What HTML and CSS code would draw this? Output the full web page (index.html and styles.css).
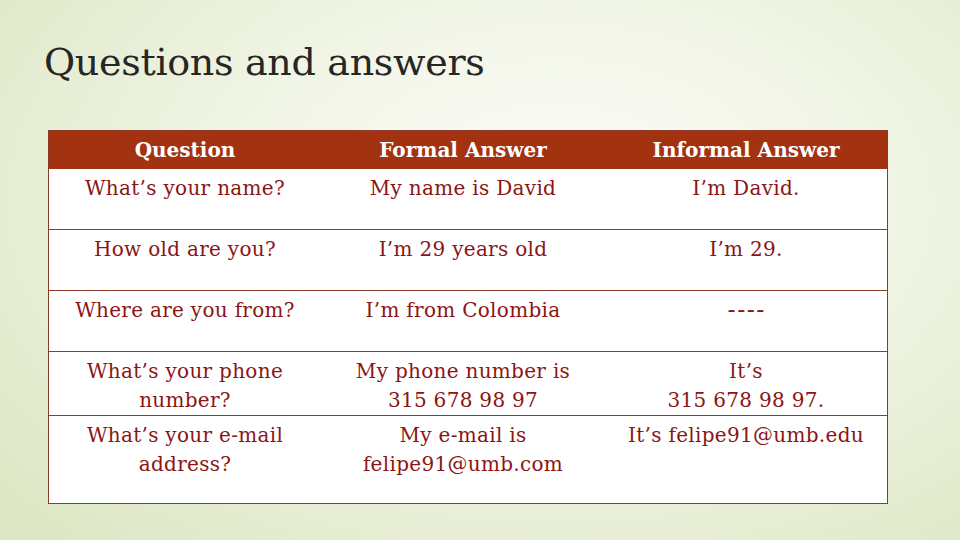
FILE: index.html
```html
<!DOCTYPE html>
<html>
<head>
<meta charset="utf-8">
<link rel="stylesheet" href="styles.css">
</head>
<body>
<div class="slide">
  <h1 class="title">Questions and answers</h1>
  <table class="qa">
    <thead>
      <tr><th class="c1">Question</th><th class="c2">Formal Answer</th><th class="c3">Informal Answer</th></tr>
    </thead>
    <tbody>
      <tr class="r1"><td>What’s your name?</td><td>My name is David</td><td>I’m David.</td></tr>
      <tr class="r2"><td>How old are you?</td><td>I’m 29 years old</td><td>I’m 29.</td></tr>
      <tr class="r3"><td>Where are you from?</td><td>I’m from Colombia</td><td class="dash">----</td></tr>
      <tr class="r4"><td>What’s your phone<br>number?</td><td>My phone number is<br>315 678 98 97</td><td>It’s<br>315 678 98 97.</td></tr>
      <tr class="r5"><td>What’s your e-mail<br>address?</td><td>My e-mail is<br>felipe91@umb.com</td><td>It’s felipe91@umb.edu</td></tr>
    </tbody>
  </table>
</div>
</body>
</html>
```
FILE: styles.css
```css
html, body {
  margin: 0;
  padding: 0;
}
.slide {
  width: 960px;
  height: 540px;
  overflow: hidden;
  background: radial-gradient(ellipse 75% 85% at 58% 38%, #fcfdf8 0%, #f1f5e6 45%, #dde7c4 100%);
  font-family: "DejaVu Serif", "Liberation Serif", serif;
  box-sizing: border-box;
  padding-top: 36px;
}
.title {
  margin: 0 0 0 44px;
  font-weight: normal;
  font-size: 38px;
  line-height: 52px;
  color: #262626;
  height: 94px;
  letter-spacing: -0.3px;
}
.qa {
  margin-left: 48px;
  width: 839px;
  border-collapse: collapse;
  border: 1px solid #8c3a2a;
  background: #ffffff;
  table-layout: fixed;
}
.qa th {
  background: #a33211;
  color: #ffffff;
  font-weight: bold;
  font-size: 20px;
  height: 38px;
  padding: 0;
  line-height: 38px;
  text-align: center;
}
.c1 { width: 272px; }
.c2 { width: 284px; }
.c3 { width: 282px; }
.qa td {
  color: #8b1515;
  font-size: 20px;
  letter-spacing: 0.3px;
  line-height: 29px;
  text-align: center;
  vertical-align: top;
  padding: 5px 0 0 0;
  border-top: 1px solid #8c3a2a;
}
.qa td.dash {
  font-size: 24px;
  letter-spacing: 1.5px;
  text-indent: 1.5px;
}
.qa tbody tr:first-child td { border-top: none; }
.r1 td { height: 55px; }
.r2 td { height: 55px; }
.r3 td { height: 55px; }
.r4 td { height: 57px; }
.r5 td { height: 82px; }
```
